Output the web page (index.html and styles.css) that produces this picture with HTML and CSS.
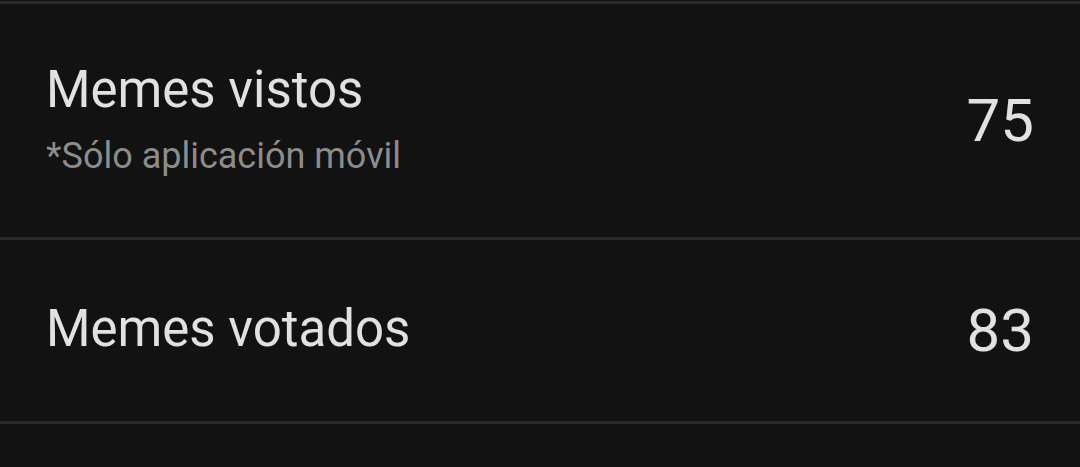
FILE: index.html
```html
<!DOCTYPE html>
<html lang="es">
<head>
<meta charset="utf-8">
<link rel="stylesheet" href="styles.css">
</head>
<body>
<div class="list">
  <div class="row row-tall">
    <div class="labels">
      <div class="title">Memes vistos</div>
      <div class="sub">*Sólo aplicación móvil</div>
    </div>
    <div class="value">75</div>
  </div>
  <div class="row row-short">
    <div class="labels">
      <div class="title">Memes votados</div>
    </div>
    <div class="value">83</div>
  </div>
</div>
</body>
</html>
```
FILE: styles.css
```css
html, body {
  margin: 0;
  padding: 0;
  background: #121212;
  width: 1080px;
  height: 467px;
  overflow: hidden;
  font-family: Roboto, "Noto Sans", sans-serif;
}
.list {
  padding-top: 1px;
}
.row {
  display: flex;
  align-items: center;
  justify-content: space-between;
  padding: 0 46px 0 46px;
  border-top: 3px solid #2a2a2a;
}
.row-tall {
  height: 233px;
}
.row-short {
  height: 181px;
  border-bottom: 3px solid #2a2a2a;
}
.labels {
  display: flex;
  flex-direction: column;
  margin-bottom: 3px;
}
.title {
  color: #e1e1e1;
  font-size: 51px;
  line-height: 60px;
}
.sub {
  color: #8c8c8c;
  font-size: 36px;
  line-height: 44px;
  margin-top: 14px;
}
.value {
  color: #e1e1e1;
  font-size: 60px;
  line-height: 70px;
}
```
